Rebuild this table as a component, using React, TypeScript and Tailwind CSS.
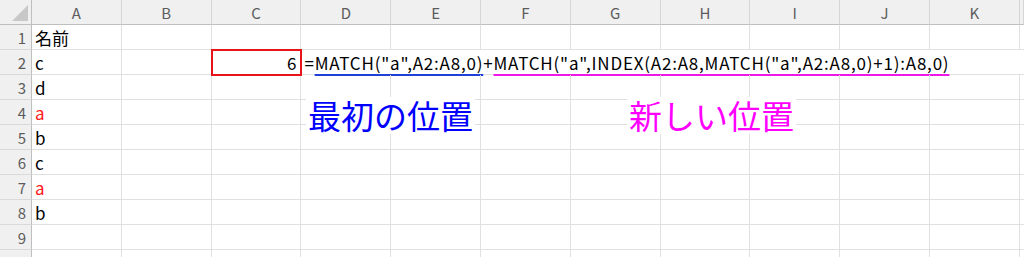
const COLS = ["A", "B", "C", "D", "E", "F", "G", "H", "I", "J", "K", ""];
const GRID = "grid grid-cols-[32px_repeat(11,89.8px)_1fr]";

const colA: Record<number, { text: string; red?: boolean }> = {
  1: { text: "名前" },
  2: { text: "c" },
  3: { text: "d" },
  4: { text: "a", red: true },
  5: { text: "b" },
  6: { text: "c" },
  7: { text: "a", red: true },
  8: { text: "b" },
};

function RowHead({ n }: { n: number }) {
  return (
    <div className="flex h-[25px] items-center justify-end border-r border-b border-r-[#bfbfbf] border-b-[#d9d9d9] bg-[#f0f0f0] pr-[5px] text-[15px] text-[#5c5c5c]">
      {n}
    </div>
  );
}

function Cell({ children, className = "" }: { children?: React.ReactNode; className?: string }) {
  return (
    <div className={`flex h-[25px] items-center border-r border-b border-[#e0e0e0] px-[3px] text-[17px] ${className}`}>
      {children}
    </div>
  );
}

export default function App() {
  return (
    <div className="relative h-[257px] w-[1024px] overflow-hidden bg-white font-['Noto_Sans_CJK_JP','Noto_Sans',sans-serif] leading-none">
      {/* column headers */}
      <div className={GRID}>
        <div className="relative h-[25px] border-r border-b border-[#bfbfbf] bg-[#f0f0f0]">
          <svg className="absolute right-[3px] bottom-[3px]" width="16" height="16" viewBox="0 0 16 16">
            <polygon points="16,0 16,16 0,16" fill="#c8c8c8" />
          </svg>
        </div>
        {COLS.map((c, i) => (
          <div
            key={i}
            className="flex h-[25px] items-center justify-center border-r border-b border-r-[#d6d6d6] border-b-[#bfbfbf] bg-[#f0f0f0] text-[15px] text-[#5c5c5c]"
          >
            {c}
          </div>
        ))}
      </div>

      {Array.from({ length: 10 }, (_, r) => {
        const n = r + 1;
        const a = colA[n];
        if (n === 2) {
          return (
            <div key={n} className={GRID}>
              <RowHead n={n} />
              <Cell className="text-black">{a.text}</Cell>
              <Cell />
              <Cell className="relative z-10 justify-end pr-[4px] text-black outline-2 -outline-offset-1 outline-[#e8141b]">6</Cell>
              {/* the formula spills over D..K, so no gridlines inside the span */}
              <div className="col-span-9 flex h-[25px] items-center border-b border-[#e0e0e0] pl-[3px] text-[17px] tracking-[0.8px] whitespace-nowrap text-black">
                =
                <span className="underline decoration-[#1f3fd9] decoration-2 underline-offset-[4px]">MATCH("a",A2:A8,0)</span>
                +
                <span className="underline decoration-[#f018e8] decoration-2 underline-offset-[4px]">
                  MATCH("a",INDEX(A2:A8,MATCH("a",A2:A8,0)+1):A8,0)
                </span>
              </div>
            </div>
          );
        }
        return (
          <div key={n} className={GRID}>
            <RowHead n={n} />
            <Cell className={a?.red ? "text-[#ff1a1a]" : "text-black"}>{a?.text}</Cell>
            {COLS.slice(1).map((_, i) => (
              <Cell key={i} />
            ))}
          </div>
        );
      })}

      {/* floating text boxes */}
      <div className="absolute top-[97px] left-[306px] bg-white px-[2px] py-[2px] text-[33px] text-[#0000ff]">最初の位置</div>
      <div className="absolute top-[97px] left-[627px] bg-white px-[2px] py-[2px] text-[33px] text-[#ff00ff]">新しい位置</div>
    </div>
  );
}
